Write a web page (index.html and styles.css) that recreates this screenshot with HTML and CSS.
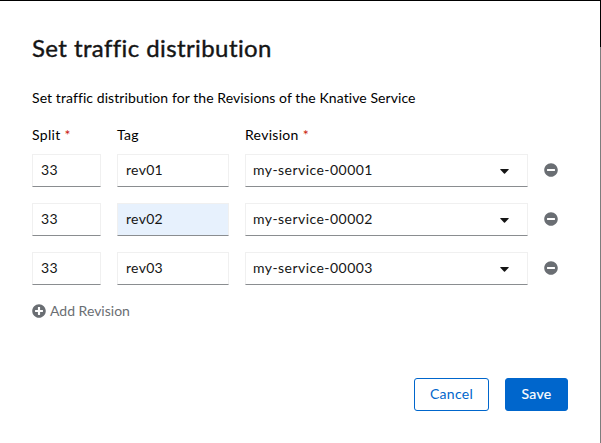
FILE: index.html
```html
<!DOCTYPE html>
<html lang="en">
<head>
<meta charset="utf-8">
<title>Set traffic distribution</title>
<link rel="stylesheet" href="styles.css">
</head>
<body>
<svg class="symbols" aria-hidden="true">
  <symbol id="minus" viewBox="0 0 512 512"><path d="M256 8C119 8 8 119 8 256s111 248 248 248 248-111 248-248S393 8 256 8zM124 296c-6.600 0-12-5.400-12-12v-56c0-6.600 5.400-12 12-12h264c6.600 0 12 5.400 12 12v56c0 6.600-5.400 12-12 12H124z"/></symbol>
  <symbol id="plus" viewBox="0 0 512 512"><path d="M256 8C119 8 8 119 8 256s111 248 248 248 248-111 248-248S393 8 256 8zm144 276c0 6.600-5.400 12-12 12h-92v92c0 6.600-5.400 12-12 12h-56c-6.600 0-12-5.400-12-12v-92h-92c-6.600 0-12-5.400-12-12v-56c0-6.600 5.400-12 12-12h92v-92c0-6.600 5.400-12 12-12h56c6.600 0 12 5.400 12 12v92h92c6.600 0 12 5.400 12 12v56z"/></symbol>
  <symbol id="caret" viewBox="0 0 9 5"><path d="M.6 0h7.800q.6.200.2.800L5 4.600q-.5.500-1 0L.4.800Q0 .2.600 0z"/></symbol>
</svg>
<main class="modal">
  <h1 class="title">Set traffic distribution</h1>
  <p class="description">Set traffic distribution for the Revisions of the Knative Service</p>
  <div class="grid labels">
    <span class="label">Split<span class="required">*</span></span>
    <span class="label">Tag</span>
    <span class="label">Revision<span class="required">*</span></span>
  </div>
  <div class="rows">
    <div class="grid">
      <div class="field">33</div>
      <div class="field">rev01</div>
      <div class="field select"><span class="name">my-service-00001</span><svg class="caret"><use href="#caret"/></svg></div>
      <svg class="icon"><use href="#minus"/></svg>
    </div>
    <div class="grid">
      <div class="field">33</div>
      <div class="field filled">rev02</div>
      <div class="field select"><span class="name">my-service-00002</span><svg class="caret"><use href="#caret"/></svg></div>
      <svg class="icon"><use href="#minus"/></svg>
    </div>
    <div class="grid">
      <div class="field">33</div>
      <div class="field">rev03</div>
      <div class="field select"><span class="name">my-service-00003</span><svg class="caret"><use href="#caret"/></svg></div>
      <svg class="icon"><use href="#minus"/></svg>
    </div>
  </div>
  <div class="add"><svg class="icon"><use href="#plus"/></svg><span>Add Revision</span></div>
  <footer class="actions">
    <button class="button secondary">Cancel</button>
    <button class="button primary">Save</button>
  </footer>
</main>
<div class="edge"></div>
</body>
</html>
```
FILE: styles.css
```css
* { box-sizing: border-box; }
body {
  margin: 0;
  width: 601px;
  height: 443px;
  display: flex;
  overflow: hidden;
  background: #fff;
  color: #151515;
  font-family: Lato, "Open Sans", sans-serif;
  font-size: 14px;
  letter-spacing: .3px;
}
.symbols { position: absolute; width: 0; height: 0; }
.modal {
  width: 600px;
  padding: 31px 32px 32px;
  border-top: 1px solid #000;
  display: flex;
  flex-direction: column;
}
.edge {
  width: 1px;
  background: linear-gradient(#000 47px, #7d7d7d 47px);
}
.title {
  margin: 0;
  font-size: 24px;
  font-weight: 400;
  line-height: 31px;
  letter-spacing: .4px;
  -webkit-text-stroke: .4px;
  white-space: nowrap;
}
.description {
  margin: 24px 0 0;
  line-height: 21px;
  letter-spacing: .08px;
  white-space: nowrap;
  color: #000;
}
.grid {
  display: grid;
  grid-template-columns: 69px 112px 283px 14px;
  column-gap: 16px;
  align-items: center;
}
.labels { margin-top: 16px; height: 21px; line-height: 21px; color: #000; }
.label { height: 21px; }
.required { margin-left: 4px; color: #c9190b; font-size: 14px; line-height: 1; }
.rows { display: grid; row-gap: 16px; margin-top: 9px; }
.field {
  height: 33px;
  padding: 0 8px;
  border: 1px solid #f0f0f0;
  border-bottom-color: #8a8d90;
  line-height: 29px;
}
.filled { background: #e7f1fd; }
.select { display: flex; justify-content: space-between; padding: 0 18px 0 7px; letter-spacing: .45px; }
.caret { width: 9px; height: 5px; margin-top: 14px; fill: #151515; }
.icon { display: block; width: 14px; height: 14px; margin-top: -1px; fill: #6a6e73; }
.add {
  display: flex;
  align-items: center;
  gap: 4px;
  height: 19px;
  margin-top: 16px;
  color: #6a6e73;
  letter-spacing: 0;
}
.add .icon { margin-top: 0; }
.actions { display: flex; justify-content: flex-end; gap: 16px; margin-top: auto; }
.button {
  height: 33px;
  padding: 0 0 2px;
  border: 1px solid #06c;
  border-radius: 3px;
  font: inherit;
  letter-spacing: inherit;
}
.secondary { width: 75px; background: #fff; color: #06c; }
.primary { width: 63px; background: #06c; color: #fff; -webkit-text-stroke: .2px; }
```
